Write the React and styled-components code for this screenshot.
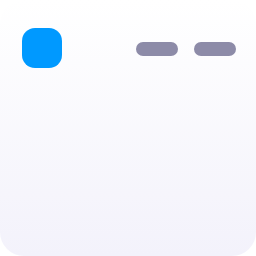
import React from "react";
import styled, { createGlobalStyle } from "styled-components";

const Global = createGlobalStyle`
  html, body { margin: 0; padding: 0; background: #ffffff; }
  body { font-family: "Inter", "Liberation Sans", sans-serif; }
`;

const Card = styled.div`
  width: 256px;
  height: 256px;
  box-sizing: border-box;
  border-radius: 24px;
  background: linear-gradient(180deg, #ffffff 0%, #f3f2fb 100%);
  padding: 28px 20px 0 22px;
`;

const Header = styled.div`
  display: flex;
  align-items: center;
  justify-content: space-between;
`;

const Logo = styled.div`
  width: 40px;
  height: 40px;
  border-radius: 13px;
  background: #0099ff;
`;

const Controls = styled.div`
  display: flex;
  gap: 16px;
  margin-top: 2px;
`;

const Pill = styled.div`
  width: 42px;
  height: 14px;
  border-radius: 7px;
  background: #8d8ba8;
`;

export default function App() {
  return (
    <>
      <Global />
      <Card>
        <Header>
          <Logo />
          <Controls>
            <Pill />
            <Pill />
          </Controls>
        </Header>
      </Card>
    </>
  );
}
